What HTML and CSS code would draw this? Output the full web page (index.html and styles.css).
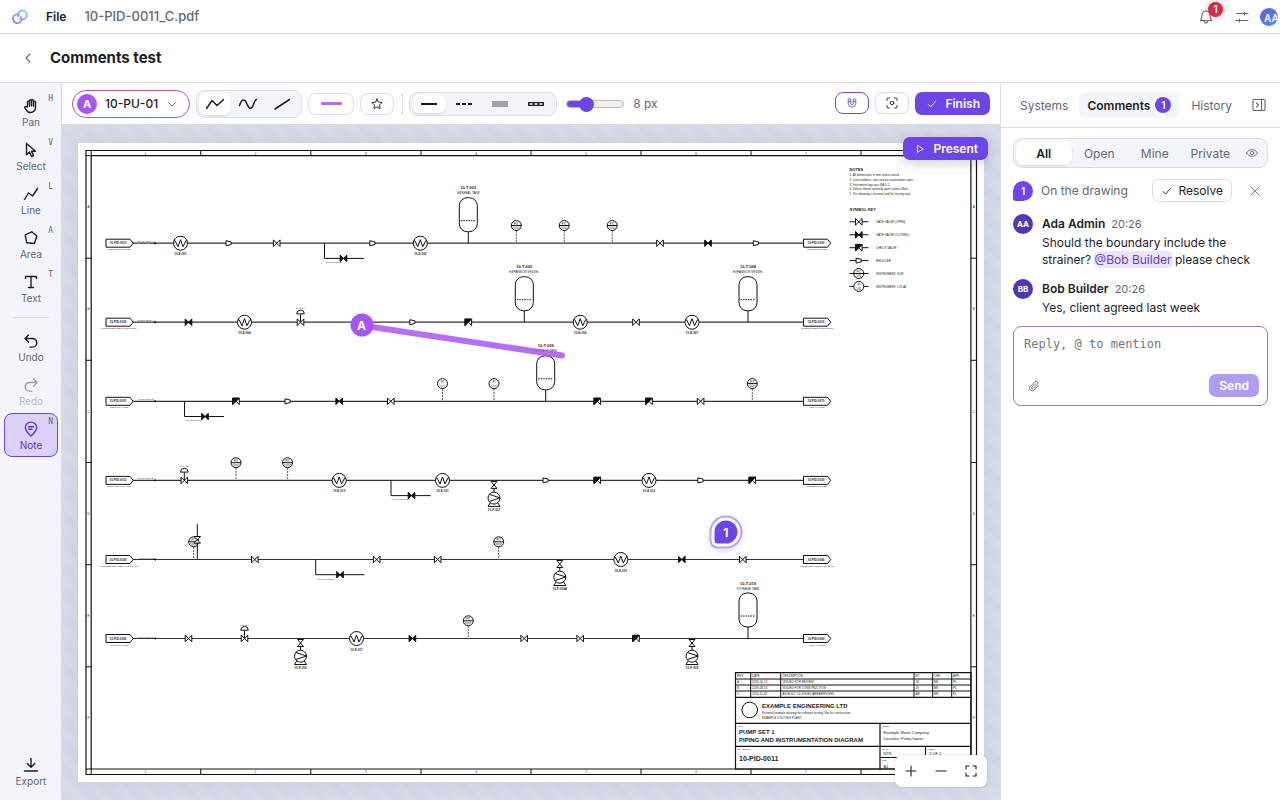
FILE: index.html
```html
<!DOCTYPE html>
<html lang="en">
<head>
<meta charset="utf-8">
<meta name="viewport" content="width=device-width, initial-scale=1">
<title>Comments test</title>
<link rel="stylesheet" href="styles.css">
</head>
<body>
<div class="app">
  <header class="topbar">
    <svg class="logo" viewBox="0 0 18 18" aria-hidden="true">
      <defs><linearGradient id="lg" gradientUnits="userSpaceOnUse" x1="2" y1="15" x2="16" y2="3"><stop offset="0" stop-color="#a45cf0"/><stop offset=".5" stop-color="#9aa2f4"/><stop offset="1" stop-color="#6fdcf5"/></linearGradient></defs>
      <path d="M8.300 6.600A4.500 4.500 0 1 0 10.800 11.500Q10.800 9.800 9.800 8.800M9 10.800A4.500 4.500 0 1 0 7.400 5.200Q6.800 7 7.400 8.600" fill="none" stroke="url(#lg)" stroke-width="1.700" stroke-linecap="round"/>
    </svg>
    <button class="menu-file" type="button">File</button>
    <span class="filename">10-PID-0011_C.pdf</span>
    <div class="top-actions">
      <button class="icon-btn bell" type="button" aria-label="Notifications">
        <svg class="i16 muted" viewBox="0 0 16 16"><path d="M8 2a4 4 0 0 0-4 4.200c0 3-1.200 4.300-1.600 5.300h11.200C13.200 10.500 12 9.200 12 6.200A4 4 0 0 0 8 2zM6.300 11.700v1a1.800 1.800 0 0 0 3.400 0v-1"/></svg>
        <span class="alert-badge">1</span>
      </button>
      <button class="icon-btn" type="button" aria-label="Preferences">
        <svg class="i16 muted" viewBox="0 0 16 16"><path d="M2 4.500h12M2 11.500h12M10.500 3v3M5.500 10v3"/></svg>
      </button>
      <button class="user" type="button" aria-label="Account">AA</button>
    </div>
  </header>

  <div class="titlebar">
    <button class="icon-btn" type="button" aria-label="Back"><svg class="i16 muted" viewBox="0 0 16 16"><path d="M10 4 6 8l4 4"/></svg></button>
    <h1>Comments test</h1>
  </div>

  <div class="workspace">
    <nav class="rail" aria-label="Tools">
      <button class="tool" type="button"><svg viewBox="0 0 16 16"><path d="M4.500 9V4.300a1 1 0 0 1 2 0V8V2.800a1 1 0 0 1 2 0V8V2.800a1 1 0 0 1 2 0V8.300V4.300a1 1 0 0 1 2 0v5.200a5 5 0 0 1-5 5c-2.300 0-3.400-1-4.200-2.400L1.800 9.800c-.5-1 .8-1.700 1.500-1z"/></svg><span>Pan</span><kbd>H</kbd></button>
      <button class="tool" type="button"><svg viewBox="0 0 16 16"><path d="M3.500 1.500v11.300l3-2.800 2 4.500 2-.9-2-4.300h4z"/></svg><span>Select</span><kbd>V</kbd></button>
      <button class="tool" type="button"><svg viewBox="0 0 16 16"><path d="m1.500 13.500 4-6.500 4 3 5-7.500"/></svg><span>Line</span><kbd>L</kbd></button>
      <button class="tool" type="button"><svg viewBox="0 0 16 16"><path d="M2.200 4.800 8.800 1.800l5 4.200-2.300 7.500-7.800-.8z"/></svg><span>Area</span><kbd>A</kbd></button>
      <button class="tool" type="button"><svg viewBox="0 0 16 16"><path d="M2.500 4.500V2.500h11v2M8 2.500v11M5.500 13.500h5"/></svg><span>Text</span><kbd>T</kbd></button>
      <hr class="rail-rule">
      <button class="tool" type="button"><svg viewBox="0 0 16 16"><path d="M5.500 2 2 5.500 5.500 9M2 5.500h7.500a4.300 4.300 0 0 1 0 8.600H7"/></svg><span>Undo</span></button>
      <button class="tool" type="button" disabled><svg viewBox="0 0 16 16"><path d="M10.500 2 14 5.500 10.500 9M14 5.500H6.500a4.300 4.300 0 0 0 0 8.600H9"/></svg><span>Redo</span></button>
      <button class="tool active" type="button" aria-pressed="true"><svg viewBox="0 0 16 16"><path d="M8 15C4 11.500 2.300 9.500 2.300 6.800a5.700 5.700 0 0 1 11.400 0C13.700 9.500 12 11.500 8 15zM5.500 5.800h5M5.500 8.300H9"/></svg><span>Note</span><kbd>N</kbd></button>
      <button class="tool export" type="button"><svg viewBox="0 0 16 16"><path d="M8 1.500V10M4.300 6.500 8 10.200l3.700-3.700M1.500 14h13"/></svg><span>Export</span></button>
    </nav>

    <main class="editor">
      <div class="toolbar">
        <button class="tag-pill" type="button"><span class="tag-dot">A</span>10-PU-01<svg class="i12 muted" viewBox="0 0 12 12"><path d="m2.500 4.500 3.500 3.500 3.500-3.500"/></svg></button>
        <div class="seg shapes" role="group" aria-label="Shape">
          <button class="on" type="button" aria-label="Polyline"><svg viewBox="0 0 20 14"><path d="m1.500 11.500 5.500-8 5 5 6.500-6"/></svg></button>
          <button type="button" aria-label="Curve"><svg viewBox="0 0 20 14"><path d="M1.500 8.500C4 1 7 2 9 7s4.500 6 6.500.5c1-3.500 1.300-4.500 3-5"/></svg></button>
          <button type="button" aria-label="Straight"><svg viewBox="0 0 20 14"><path d="M3 12 17.500 2.500"/></svg></button>
        </div>
        <button class="box-btn color" type="button" aria-label="Line colour"><span class="swatch"></span></button>
        <button class="box-btn" type="button" aria-label="Favourite"><svg class="i12" viewBox="0 0 12 12"><path d="m6 .9 1.500 3.200 3.500.5-2.500 2.500.6 3.500L6 8.900l-3.100 1.700.6-3.500L1 4.600l3.500-.5z"/></svg></button>
        <span class="rule"></span>
        <div class="seg styles" role="group" aria-label="Line style">
          <button class="on" type="button" aria-label="Solid"><svg viewBox="0 0 18 6"><path d="M1 3h16"/></svg></button>
          <button type="button" aria-label="Dashed"><svg viewBox="0 0 18 6"><path d="M1 3h16" stroke-dasharray="4 2"/></svg></button>
          <button type="button" aria-label="Wide"><svg viewBox="0 0 18 6"><path d="M1 3h16" stroke="#a3a4ab" stroke-width="6"/></svg></button>
          <button type="button" aria-label="Traced"><svg viewBox="0 0 18 6"><path d="M1 3h16" stroke-width="4"/><path d="M2.500 3h13" stroke="#fff" stroke-width="1.500" stroke-dasharray="3 2"/></svg></button>
        </div>
        <input class="width" type="range" min="1" max="26" value="8" aria-label="Line width">
        <output class="width-value">8 px</output>
        <div class="toolbar-end">
          <button class="box-btn magnet" type="button" aria-label="Snap"><svg class="i10" viewBox="0 0 12 12"><path d="M1.500 1.500v5a4.500 4.500 0 0 0 9 0v-5h-3v5a1.500 1.500 0 0 1-3 0v-5zM1.500 4.300h3M7.500 4.300h3"/></svg></button>
          <button class="box-btn" type="button" aria-label="Focus"><svg class="i12" viewBox="0 0 12 12"><path d="M1 3.500V2a1 1 0 0 1 1-1h1.500M8.500 1H10a1 1 0 0 1 1 1v1.500M11 8.500V10a1 1 0 0 1-1 1H8.500M3.500 11H2a1 1 0 0 1-1-1V8.500"/><circle cx="6" cy="6" r="1.800"/></svg></button>
          <button class="primary" type="button"><svg class="i10" viewBox="0 0 12 12"><path d="m1.500 6.500 3 3 6-7"/></svg>Finish</button>
        </div>
      </div>

      <div class="canvas">
        <div class="sheet">
          <svg class="drawing" viewBox="78 143 906 639" role="img" aria-label="Piping and instrumentation diagram">
            <defs>
              <g id="open"><path class="w" d="M-3.300-3.300v6.600L3.300-3.300v6.600z"/></g>
              <g id="closed"><path class="k" d="M-3.300-3.300v6.600L3.300-3.300v6.600z"/></g>
              <g id="check"><path class="w" d="M-3.300-3.300v6.600L3.300-3.300v6.600z"/><path class="k" d="M-3.300 3.300v-6.600H3.300z"/></g>
              <g id="red"><path class="w" d="M-2.700-2.500 2.500-1.300v2.600L-2.700 2.500z"/></g>
              <g id="hx"><circle class="w" r="7"/><path class="l" d="M-6.500-2.500h1L-2.500 3.500 0-3.500 2.500 3.500 5.500-2.500h1"/></g>
              <g id="tank"><path class="l" d="M0-11.500V0"/><rect class="w" x="-9" y="-45.500" width="18" height="34" rx="8"/><path class="l" stroke-dasharray="1.500 1" d="M-7.500-22.500h15"/></g>
              <g id="inst"><path class="thin" stroke-dasharray="2 1" d="M0-12.500V0"/><circle class="w" cy="-17.700" r="5"/><path d="M-4-16.500h8l-2 2.500h-4z" fill="#bbb"/><path class="l" d="M-5-17.700H5"/><text class="t3 c" y="-18.700">PIT</text></g>
              <g id="local"><path class="thin" stroke-dasharray="2 1" d="M0-12.500V0"/><circle class="w" cy="-17.700" r="5"/><path d="M-4-16.500h8l-2 2.500h-4z" fill="#ccc"/><text class="t3 c" y="-18.500">PI</text></g>
              <g id="ctrl"><path class="l" d="M0-8V0"/><path class="w" d="M-3.800-8.300a3.800 3.800 0 0 1 7.600 0z"/><use href="#open"/></g>
              <g id="pump"><path class="l" d="M0 7.500V12"/><path class="w" d="M-3 1h6L-3 8h6z"/><path class="w" d="m-3.500 22-2.500 4H6l-2.500-4z"/><circle class="w" cy="17.700" r="6"/><path class="l" d="m-4.500 14 10.500 3.500-10.500 3.500"/></g>
              <g id="inlet"><path class="w" d="M106-4h24l3.200 4-3.200 4h-24z"/><path class="pipe" d="M133.200 0H803.500"/><path class="w" d="M803.500-4h24l3.200 4-3.200 4h-24z"/><path d="M156-1.200v2.400l-3-1.200z" fill="#111"/></g>
              <g id="drain"><path class="l" d="M0 0v15.200h39.500"/></g>
            </defs>

            <path class="frame" d="M86 150.500h890.500v624H86zM91.200 155.700h879.700V769H91.200z"/>
            <path class="l" d="M200.700 150.500v5.200M310.800 150.500v5.200M421 150.500v5.200M531 150.500v5.200M641 150.500v5.200M751 150.500v5.200M861 150.500v5.200M200.700 769v5.500M310.800 769v5.500M421 769v5.500M531 769v5.500M641 769v5.500M751 769v5.500M861 769v5.500M86 155.700h5.200M91.200 150.500v5.200M86 769h5.200M91.200 769v5.500M86 258.200h5.200M86 360.300h5.200M86 462.500h5.200M86 564.700h5.200M86 666.800h5.200M971 258.200h5.500M971 360.300h5.500M971 462.500h5.500M971 564.700h5.500M971 666.800h5.500"/>
            <g class="t3 c">
              <text x="145.600" y="154.500">1</text><text x="255.700" y="154.500">2</text><text x="365.800" y="154.500">3</text><text x="476" y="154.500">4</text><text x="586" y="154.500">5</text><text x="696" y="154.500">6</text><text x="806" y="154.500">7</text>
              <text x="145.600" y="773">1</text><text x="255.700" y="773">2</text><text x="365.800" y="773">3</text><text x="476" y="773">4</text><text x="586" y="773">5</text><text x="696" y="773">6</text><text x="806" y="773">7</text>
              <text x="88.500" y="208">A</text><text x="88.500" y="310">B</text><text x="88.500" y="412.500">C</text><text x="88.500" y="514.500">D</text><text x="88.500" y="617">E</text><text x="88.500" y="719">F</text>
              <text x="973.800" y="208">A</text><text x="973.800" y="310">B</text><text x="973.800" y="412.500">C</text><text x="973.800" y="514.500">D</text><text x="973.800" y="617">E</text><text x="973.800" y="719">F</text>
            </g>

            <g transform="translate(0 243.200)">
              <use href="#inlet"/>
              <use href="#hx" x="180.500"/><use href="#red" x="228.700"/><use href="#open" x="276.700"/><use href="#drain" x="324.500"/><use href="#closed" x="343.500" y="15.200"/><use href="#red" x="372.500"/><use href="#hx" x="420.300"/><use href="#tank" x="468.300"/><use href="#inst" x="516.300"/><use href="#inst" x="564.200"/><use href="#inst" x="612.200"/><use href="#open" x="660"/><use href="#closed" x="708"/><use href="#red" x="756"/>
              <g class="t3 b c"><text x="118" y="1">10-PID-0110</text><text x="816" y="1">10-PID-0020</text><text x="180.500" y="12">10-E-001</text><text x="420.300" y="12">10-E-002</text><text class="t4" x="468.300" y="-54">10-T-003</text></g>
              <g class="t2 c"><text x="119" y="7">FROM COOLING WATER</text><text x="146" y="-1">150-CW-10001-A1</text><text x="817" y="7">TO COOLING WATER</text><text x="334" y="20">DRAIN TO SUMP</text><text class="t3" x="468.300" y="-49">GENERAL TANK</text></g>
            </g>
            <g transform="translate(0 322.200)">
              <use href="#inlet"/>
              <use href="#closed" x="188.500"/><use href="#hx" x="244.500"/><use href="#ctrl" x="300.500"/><use href="#red" x="412.500"/><use href="#check" x="468.300"/><use href="#tank" x="524.300"/><use href="#hx" x="580.200"/><use href="#open" x="636"/><use href="#hx" x="692"/><use href="#tank" x="748"/>
              <g class="t3 b c"><text x="118" y="1">10-PID-0020</text><text x="816" y="1">10-PID-0010</text><text x="244.500" y="12">10-E-004</text><text x="580.200" y="12">10-E-006</text><text x="692" y="12">10-E-007</text><text class="t4" x="524.300" y="-54">10-T-005</text><text class="t4" x="748" y="-54">10-T-008</text></g>
              <g class="t2 c"><text x="119" y="7">FROM BOILER FEED WATER PUMPS</text><text x="146" y="-1">80-BFW-10002-A1</text><text x="817" y="7">TO BOILER FEED WATER PUMPS</text><text x="300.500" y="-13">10-FV-204</text><text class="t3" x="524.300" y="-49">EXPANSION VESSEL</text><text class="t3" x="748" y="-49">EXPANSION VESSEL</text></g>
            </g>
            <g transform="translate(0 401.300)">
              <use href="#inlet"/>
              <use href="#drain" x="184.500"/><use href="#closed" x="205" y="15.200"/><use href="#check" x="236"/><use href="#red" x="287.700"/><use href="#closed" x="339.200"/><use href="#open" x="390.800"/><use href="#local" x="442.500"/><use href="#local" x="494"/><use href="#tank" x="545.700"/><use href="#check" x="597.300"/><use href="#check" x="649"/><use href="#open" x="700.600"/><use href="#inst" x="752.300"/>
              <g class="t3 b c"><text x="118" y="1">10-PID-0001</text><text x="816" y="1">10-PID-0070</text><text class="t4" x="545.700" y="-54">10-T-009</text></g>
              <g class="t2 c"><text x="119" y="7">FROM RAW WATER</text><text x="146" y="-1">80-RW-10003-C1</text><text x="817" y="7">TO RAW WATER</text><text x="194" y="20">DRAIN TO SUMP</text><text class="t3" x="545.700" y="-49">STORAGE TANK</text></g>
            </g>
            <g transform="translate(0 480.400)">
              <use href="#inlet"/>
              <use href="#ctrl" x="184.300"/><use href="#inst" x="236"/><use href="#inst" x="287.600"/><use href="#hx" x="339.200"/><use href="#drain" x="391"/><use href="#closed" x="411.500" y="15.200"/><use href="#hx" x="442.500"/><use href="#pump" x="494"/><use href="#red" x="545.700"/><use href="#check" x="597.300"/><use href="#hx" x="649"/><use href="#red" x="700.600"/><use href="#check" x="752.300"/>
              <g class="t3 b c"><text x="118" y="1">10-PID-0012</text><text x="816" y="1">10-PID-0030</text><text x="339.200" y="12">10-E-010</text><text x="442.500" y="12">10-E-011</text><text x="494" y="30.500">10-P-012</text><text x="649" y="12">10-E-013</text></g>
              <g class="t2 c"><text x="119" y="7">FROM COOLING WATER</text><text x="146" y="-1">100-CW-10004-B1</text><text x="817" y="7">TO COOLING WATER</text><text x="401" y="20">DRAIN TO SUMP</text><text x="184.300" y="-13">10-PV-405</text></g>
            </g>
            <g transform="translate(0 559.500)">
              <use href="#inlet"/>
              <use href="#inst" x="193.700"/><path class="l" d="M197.300-35.500V0"/><path class="w" d="M194-23h6.600l-6.600 6.600h6.600z"/><use href="#open" x="254.800"/><path class="l" d="M315.700 0v15.200h48.800"/><use href="#closed" x="340" y="15.200"/><use href="#open" x="376.700"/><use href="#open" x="437.700"/><use href="#inst" x="498.700"/><use href="#pump" x="559.800"/><use href="#hx" x="620.800"/><use href="#closed" x="681.800"/><use href="#open" x="742.800"/>
              <g class="t3 b c"><text x="118" y="1">10-PID-0030</text><text x="816" y="1">10-PID-0040</text><text x="559.800" y="30.500">10-P-014A</text><text x="620.800" y="12">10-E-015</text></g>
              <g class="t2 c"><text x="119" y="7">FROM DEMINERALISED WATER PLANT</text><text x="147" y="-1">80-DW-10005-C1</text><text x="817" y="7">TO DEMINERALISED WATER PLANT</text><text x="326" y="20">DRAIN TO SUMP</text></g>
            </g>
            <g transform="translate(0 638.500)">
              <use href="#inlet"/>
              <use href="#open" x="188.500"/><use href="#ctrl" x="244.500"/><use href="#pump" x="300.500"/><use href="#hx" x="356.500"/><use href="#closed" x="412.400"/><use href="#inst" x="468.300"/><use href="#open" x="524.200"/><use href="#open" x="580.200"/><use href="#check" x="636"/><use href="#pump" x="692"/><use href="#tank" x="748"/>
              <g class="t3 b c"><text x="118" y="1">10-PID-0050</text><text x="816" y="1">10-PID-0060</text><text x="300.500" y="30.500">10-P-016</text><text x="356.500" y="12">10-E-017</text><text x="692" y="30.500">10-P-018</text><text class="t4" x="748" y="-54">10-T-019</text></g>
              <g class="t2 c"><text x="119" y="7">FROM RAW WATER</text><text x="146" y="-1">80-RW-10006-C1</text><text x="817" y="7">TO RAW WATER</text><text x="244.500" y="-13">10-FV-606</text><text class="t3" x="748" y="-49">STORAGE TANK</text></g>
            </g>

            <g class="t3">
              <text class="t4 b" x="849.500" y="170.500">NOTES</text>
              <text x="849.500" y="176">1. All dimensions in mm unless noted.</text><text x="849.500" y="181">2. Line numbers: size-service-areanumber-spec.</text><text x="849.500" y="185.700">3. Instrument tags per ISA-5.1.</text><text x="849.500" y="190.200">4. Valves shown normally open unless filled.</text><text x="849.500" y="194.800">5. This drawing is fictional and for testing only.</text>
              <text class="t4 b" x="849.500" y="211">SYMBOL KEY</text>
              <text x="876" y="222.800">GATE VALVE (OPEN)</text><text x="876" y="235.800">GATE VALVE (CLOSED)</text><text x="876" y="248.700">CHECK VALVE</text><text x="876" y="261.600">REDUCER</text><text x="876" y="274.500">INSTRUMENT: SCR</text><text x="876" y="287.500">INSTRUMENT: LOCAL</text>
            </g>
            <path class="l" d="M849.500 221.800h19M849.500 234.800h19M849.500 247.700h19M849.500 260.600h19M849.500 273.500h19M849.500 286.400h19"/>
            <use href="#open" x="858.800" y="221.800"/><use href="#closed" x="858.800" y="234.800"/><use href="#check" x="858.800" y="247.700"/><use href="#red" x="858.800" y="260.600"/>
            <circle class="w" cx="858.800" cy="273.500" r="5"/><path class="l" d="M854 273.500h10"/><circle class="w" cx="858.800" cy="286.400" r="5"/>
            <g class="t3 c"><text x="858.800" y="272.500">PIT</text><text x="858.800" y="277">101</text><text x="858.800" y="285.500">PI</text><text x="858.800" y="290">101</text></g>

            <path class="frame" d="M735.500 672.700H971V769H735.500zM735.500 697.300H971M735.500 723.300H971M735.500 746.300H971M880 723.300V769M880 757.500h91M925.500 746.300v11.200"/>
            <path class="l" d="M735.500 679H971M735.500 685H971M735.500 691H971M750.700 672.700v24.600M780.700 672.700v24.600M914 672.700v24.600M932.700 672.700v24.600M951.700 672.700v24.600"/>
            <g class="t3">
              <text x="737" y="677">REV</text><text x="752" y="677">DATE</text><text x="782.500" y="677">DESCRIPTION</text><text x="915.500" y="677">BY</text><text x="934" y="677">CHK</text><text x="953" y="677">APP</text>
              <text x="737" y="683">A</text><text x="752" y="683">2026-05-12</text><text x="782.500" y="683">ISSUED FOR REVIEW</text><text x="915.500" y="683">JS</text><text x="934" y="683">MK</text><text x="953" y="683">PL</text>
              <text x="737" y="689">B</text><text x="752" y="689">2026-08-03</text><text x="782.500" y="689">ISSUED FOR CONSTRUCTION</text><text x="915.500" y="689">JS</text><text x="934" y="689">MK</text><text x="953" y="689">PL</text>
              <text x="737" y="695">C</text><text x="752" y="695">2026-11-02</text><text x="782.500" y="695">AS BUILT, CLOUDED AREA REVISED</text><text x="915.500" y="695">AR</text><text x="934" y="695">MK</text><text x="953" y="695">PL</text>
            </g>
            <circle class="w" cx="749.700" cy="710" r="7.800"/>
            <text class="t6 b" x="762" y="708.300">EXAMPLE ENGINEERING LTD</text>
            <text class="t3" x="762" y="714">Fictional example drawing for software testing. Not for construction.</text>
            <text class="t3" x="762" y="719">EXAMPLE UTILITIES PLANT</text>
            <text class="t6 b" x="739" y="734">PUMP SET 1</text>
            <text class="t6 b" x="739" y="742.200">PIPING AND INSTRUMENTATION DIAGRAM</text>
            <text class="t7 b" x="739" y="761">10-PID-0011</text>
            <text class="t4" x="883.500" y="734">Example Water Company</text><text class="t4" x="883.500" y="740.300">Location: Pump house</text>
            <text class="t4" x="883.500" y="755">NTS</text><text class="t4" x="929" y="755">1 OF 1</text><text class="t4" x="883.500" y="767.500">A1</text>
            <g class="t2"><text x="737.500" y="726.500">TITLE</text><text x="737.500" y="750">DRAWING No.</text><text x="882" y="726.500">CLIENT</text><text x="882" y="750">SCALE</text><text x="927.500" y="750">SHEET</text><text x="882" y="760.500">SIZE</text></g>
            <path class="markup" d="M362 325.500 562 355.500"/>
          </svg>
          <button class="pin line-pin" type="button">A</button>
          <button class="pin note-pin" type="button">1</button>
        </div>
        <button class="primary present" type="button"><svg class="i10" viewBox="0 0 12 12"><path d="M3 2v8l6.500-4z"/></svg>Present</button>
        <div class="zoom">
          <button type="button" aria-label="Zoom in"><svg viewBox="0 0 12 12"><path d="M6 1v10M1 6h10"/></svg></button>
          <button type="button" aria-label="Zoom out"><svg viewBox="0 0 12 12"><path d="M1 6h10"/></svg></button>
          <button type="button" aria-label="Fit"><svg viewBox="0 0 12 12"><path d="M1 4V1h3M8 1h3v3M11 8v3H8M4 11H1V8"/></svg></button>
        </div>
      </div>
    </main>

    <aside class="panel">
      <div class="tabs" role="tablist">
        <button role="tab" type="button">Systems</button>
        <button class="on" role="tab" type="button" aria-selected="true">Comments<span class="count">1</span></button>
        <button role="tab" type="button">History</button>
        <button class="icon-btn collapse" type="button" aria-label="Collapse panel"><svg class="i14 muted" viewBox="0 0 14 14"><path d="M2 1.500h10q1 0 1 1v9q0 1-1 1H2q-1 0-1-1v-9q0-1 1-1zM9.500 1.500v11M4.500 5l2 2-2 2"/></svg></button>
      </div>
      <div class="panel-body">
        <div class="filters" role="group" aria-label="Filter comments">
          <button class="on" type="button">All</button><button type="button">Open</button><button type="button">Mine</button><button type="button">Private</button>
          <button class="eye" type="button" aria-label="Visibility"><svg class="i12" viewBox="0 0 12 12"><path d="M.5 6C3 1.500 9 1.500 11.500 6 9 10.500 3 10.500.5 6z"/><circle cx="6" cy="6" r="1.800"/></svg></button>
        </div>
        <div class="thread-head">
          <span class="bubble">1</span><span class="where">On the drawing</span>
          <button class="resolve" type="button"><svg class="i12" viewBox="0 0 12 12"><path d="m2 6.500 2.500 2.500L10 3"/></svg>Resolve</button>
          <button class="icon-btn close" type="button" aria-label="Close"><svg class="i12 muted" viewBox="0 0 12 12"><path d="m2 2 8 8M10 2l-8 8"/></svg></button>
        </div>
        <article class="comment">
          <span class="avatar">AA</span>
          <div><div class="who"><strong>Ada Admin</strong><time>20:26</time></div>
          <p>Should the boundary include the strainer? <span class="mention">@Bob Builder</span> please check</p></div>
        </article>
        <article class="comment">
          <span class="avatar">BB</span>
          <div><div class="who"><strong>Bob Builder</strong><time>20:26</time></div>
          <p>Yes, client agreed last week</p></div>
        </article>
        <form class="reply">
          <textarea rows="2" aria-label="Reply" placeholder="Reply, @ to mention"></textarea>
          <div class="reply-row">
            <button class="icon-btn" type="button" aria-label="Attach file"><svg class="i12 muted" viewBox="0 0 12 12"><path d="M10.500 5.500 6 10a2.500 2.500 0 0 1-3.700-3.600L7 1.800a1.700 1.700 0 0 1 2.500 2.400L5 8.700a.8.800 0 0 1-1.200-1.200L7.500 3.800"/></svg></button>
            <button class="send" type="submit" disabled>Send</button>
          </div>
        </form>
      </div>
    </aside>
  </div>
</div>
</body>
</html>
```
FILE: styles.css
```css
:root {
  --ink: #1d1d24;
  --muted: #646775;
  --line: #dcdde6;
  --soft: #f4f5fa;
  --accent: #6d45e8;
  --violet: #a855f7;
}
* { box-sizing: border-box; }
body { margin: 0; font: 12px/17px Inter, "Open Sans", sans-serif; color: var(--ink); background: #fff; }
button { font: inherit; color: inherit; background: none; border: 0; padding: 0; cursor: pointer; }
svg { display: block; fill: none; stroke: currentColor; stroke-linecap: round; stroke-linejoin: round; flex: none; }
h1, p { margin: 0; }
.i10 { width: 10px; height: 10px; }
.i12 { width: 12px; height: 12px; stroke-width: .9; }
.i14 { width: 14px; height: 14px; stroke-width: 1.100; }
.i16 { width: 16px; height: 16px; stroke-width: 1.100; }
.muted { color: var(--muted); }
.icon-btn { display: grid; place-items: center; }

.app { display: flex; flex-direction: column; min-height: 100vh; }
.topbar { display: flex; align-items: center; height: 34px; padding: 0 2px 0 11px; border-bottom: 1px solid var(--line); }
.logo { width: 18px; height: 18px; }
.menu-file { margin-left: 17px; font-weight: 600; }
.filename { margin-left: 18px; font-size: 13px; font-weight: 500; color: var(--muted); }
.top-actions { display: flex; align-items: center; gap: 20px; margin-left: auto; }
.bell { position: relative; }
.alert-badge { position: absolute; left: 10px; top: -7px; width: 15px; height: 15px; border-radius: 50%; background: #d02c48; color: #fff; font-size: 10px; font-weight: 600; line-height: 15px; box-shadow: 0 0 6px #e8546c80; }
.user { width: 18px; height: 18px; margin-left: -10px; padding-left: 4px; overflow: hidden; border-radius: 50%; background: linear-gradient(135deg, #5f55e0, #4699ee); color: #fff; font-size: 10px; font-weight: 600; line-height: 20px; }
.titlebar { display: flex; align-items: center; gap: 14px; height: 49px; padding: 0 20px; border-bottom: 1px solid var(--line); }
.titlebar h1 { font-size: 15px; font-weight: 700; line-height: 20px; }

.workspace { flex: 1; display: grid; grid-template-columns: 62px minmax(0, 1fr) 280px; }
.rail { display: flex; flex-direction: column; padding: 7px 3px 7px 4px; background: var(--soft); border-right: 1px solid var(--line); }
.tool { position: relative; display: flex; flex-direction: column; align-items: center; gap: 1px; height: 44px; padding-top: 7px; border: 1px solid transparent; border-radius: 8px; }
.tool svg { width: 16px; height: 16px; stroke-width: 1.400; }
.tool span { font-size: 10px; line-height: 14px; color: var(--muted); }
.tool kbd { position: absolute; top: 3px; right: 4px; font: 8px/9px "DejaVu Sans Mono", monospace; color: var(--muted); }
.tool:disabled { opacity: .4; }
.tool.active { color: #5b35d0; background: #dcd2f8; border-color: var(--accent); }
.tool.active span { color: #5b35d0; }
.rail-rule { width: 36px; height: 1px; margin: 7px auto; border: 0; background: var(--line); }
.export { margin-top: auto; }

.editor { display: flex; flex-direction: column; min-width: 0; }
.toolbar { display: flex; align-items: center; gap: 6px; height: 42px; padding: 0 10px; border-bottom: 1px solid var(--line); }
.tag-pill { display: flex; align-items: center; gap: 8px; height: 28px; padding: 0 11px 0 4px; border: 1px solid #9d55d8; border-radius: 14px; font-weight: 500; }
.tag-dot { width: 20px; height: 20px; border-radius: 50%; background: var(--violet); color: #fff; font-size: 11px; font-weight: 700; line-height: 20px; text-align: center; }
.seg { display: flex; padding: 2px; border: 1px solid var(--line); border-radius: 9px; background: var(--soft); }
.seg button { display: grid; place-items: center; border-radius: 7px; }
.seg .on { background: #fff; box-shadow: 0 1px 2px #23234026; }
.shapes button { width: 34px; height: 22px; }
.shapes button:first-child { width: 32px; }
.shapes svg { width: 20px; height: 14px; stroke-width: 1.500; }
.styles button { width: 36px; height: 18px; }
.styles button:first-child { width: 34px; }
.styles svg { width: 18px; height: 6px; stroke-width: 2; stroke-linecap: butt; }
.box-btn { display: grid; place-items: center; width: 34px; height: 22px; border: 1px solid var(--line); border-radius: 8px; }
.color { width: 46px; }
.swatch { width: 21px; height: 3px; border-radius: 1px; background: #b66cf5; }
.rule { width: 1px; height: 22px; margin: 0 0 0 2px; background: var(--line); }
.width { appearance: none; width: 58px; height: 16px; margin: 0 3px; background: none; }
.width::-webkit-slider-runnable-track { height: 8px; border: 1px solid #b9b9c0; border-radius: 4px; background: linear-gradient(90deg, var(--accent) 33%, #efefef 33%); }
.width::-webkit-slider-thumb { appearance: none; width: 15px; height: 15px; margin-top: -4px; border-radius: 50%; background: var(--accent); }
.width-value { color: var(--muted); }
.toolbar-end { display: flex; gap: 6px; margin-left: auto; }
.magnet { border-color: var(--accent); color: var(--accent); }
.primary { display: flex; align-items: center; gap: 8px; height: 23px; padding: 0 10px 0 12px; border-radius: 7px; background: var(--accent); color: #fff; font-weight: 600; }

.canvas { position: relative; flex: 1; display: flex; align-items: center; padding: 16px; background: repeating-linear-gradient(45deg, #d6d9e6 0 9px, #d9dce7 9px 18px); }
.sheet { position: relative; width: 100%; background: #fff; box-shadow: 0 0 20px #b4b4d066; }
.drawing { width: 100%; color: #111; stroke: none; }
.drawing text { fill: #222; stroke: none; font-family: "Liberation Sans", Arial, sans-serif; }
.drawing .w, .drawing .l, .drawing .k, .frame { stroke: #111; stroke-width: 1; stroke-linejoin: miter; stroke-linecap: butt; }
.drawing .w { fill: #fff; }
.drawing .k { fill: #111; }
.drawing .frame { stroke-width: 1.200; }
.pipe { stroke: #333; stroke-width: 1.200; }
.thin { stroke: #555; stroke-width: 1; stroke-linecap: butt; }
.t2 { font-size: 2px; }
.t3 { font-size: 3px; }
.t4 { font-size: 4px; }
.t6 { font-size: 6px; }
.t7 { font-size: 7px; }
.b { font-weight: 700; }
.c { text-anchor: middle; }
.markup { stroke: var(--violet); stroke-width: 6; stroke-opacity: .85; }
.pin { position: absolute; color: #fff; font-size: 12px; font-weight: 700; text-align: center; transform: translate(-50%, -50%); }
.line-pin { left: 31.300%; top: 28.500%; width: 23px; height: 23px; border-radius: 50%; background: var(--violet); }
.note-pin { left: 71.500%; top: 60.900%; width: 29px; height: 29px; border: 3px solid #fff; border-radius: 50% 50% 50% 6px; background: var(--accent); box-shadow: 0 0 0 2px #b8a4ee, 0 2px 8px #6d45e855; }
.present { position: absolute; top: 12px; right: 12px; box-shadow: 0 4px 12px #30305033; }
.zoom { position: absolute; right: 13px; bottom: 13px; display: flex; padding: 2px 1px; border-radius: 7px; background: #fff; box-shadow: 0 0 2px #30305040; }
.zoom button { display: grid; place-items: center; width: 30px; height: 28px; }
.zoom svg { width: 12px; height: 12px; stroke-width: 1.100; }

.panel { border-left: 1px solid var(--line); }
.tabs { display: flex; align-items: center; height: 45px; padding: 0 14px 0 12px; border-bottom: 1px solid var(--line); color: var(--muted); }
.tabs [role=tab] { display: flex; align-items: center; gap: 5px; height: 26px; padding: 0 11px 0 7px; border-radius: 7px; }
.tabs .on { padding: 0 8px; background: var(--soft); color: var(--ink); font-weight: 600; }
.tabs .on + [role=tab] { padding: 0 12px; }
.count { width: 16px; height: 16px; border-radius: 50%; background: var(--accent); color: #fff; font-size: 10px; line-height: 16px; text-align: center; }
.collapse { margin-left: auto; }
.panel-body { padding: 10px 12px; }
.filters { display: grid; grid-template-columns: repeat(4, 1fr) 27px; padding: 2px; border: 1px solid var(--line); border-radius: 9px; background: var(--soft); color: var(--muted); }
.filters button { display: grid; place-items: center; height: 24px; border-radius: 7px; }
.filters .on { background: #fff; color: var(--ink); font-weight: 600; box-shadow: 0 1px 2px #23234026; }
.thread-head { display: flex; align-items: center; height: 23px; margin-top: 11px; }
.bubble { width: 20px; height: 20px; border-radius: 50% 50% 50% 3px; background: var(--accent); color: #fff; font-size: 10px; font-weight: 600; line-height: 20px; text-align: center; }
.where { margin-left: 8px; color: var(--muted); }
.resolve { display: flex; align-items: center; gap: 5px; height: 23px; margin-left: auto; padding: 0 8px; border: 1px solid var(--line); border-radius: 7px; }
.close { width: 36px; padding-left: 9px; }
.close svg { stroke-width: .8; }
.comment { display: grid; grid-template-columns: 20px 1fr; gap: 9px; margin-top: 12px; }
.comment + .comment { margin-top: 11px; }
.avatar { width: 20px; height: 20px; border-radius: 50%; background: #5436b4; color: #fff; font-size: 8px; font-weight: 700; line-height: 20px; text-align: center; }
.who { display: flex; gap: 6px; line-height: 20px; }
.who strong { font-weight: 600; }
.who time { font-size: 11px; color: var(--muted); }
.mention { border-radius: 4px; background: #ebe4fc; box-shadow: 0 0 0 1px #ebe4fc; color: #6440d0; }
.reply { margin-top: 10px; padding: 8px; border: 1px solid #9280d4; border-radius: 8px; }
.reply textarea { display: block; width: 100%; height: 39px; padding: 1px 2px; border: 0; outline: 0; resize: none; font: 12px/17px "DejaVu Sans Mono", monospace; background: none; }
.reply textarea::placeholder { color: #757575; }
.reply-row { display: flex; justify-content: space-between; }
.reply-row .icon-btn { width: 24px; }
.send { height: 23px; padding: 0 10px; border-radius: 7px; background: #b19df2; color: #fff; font-weight: 600; }
```
